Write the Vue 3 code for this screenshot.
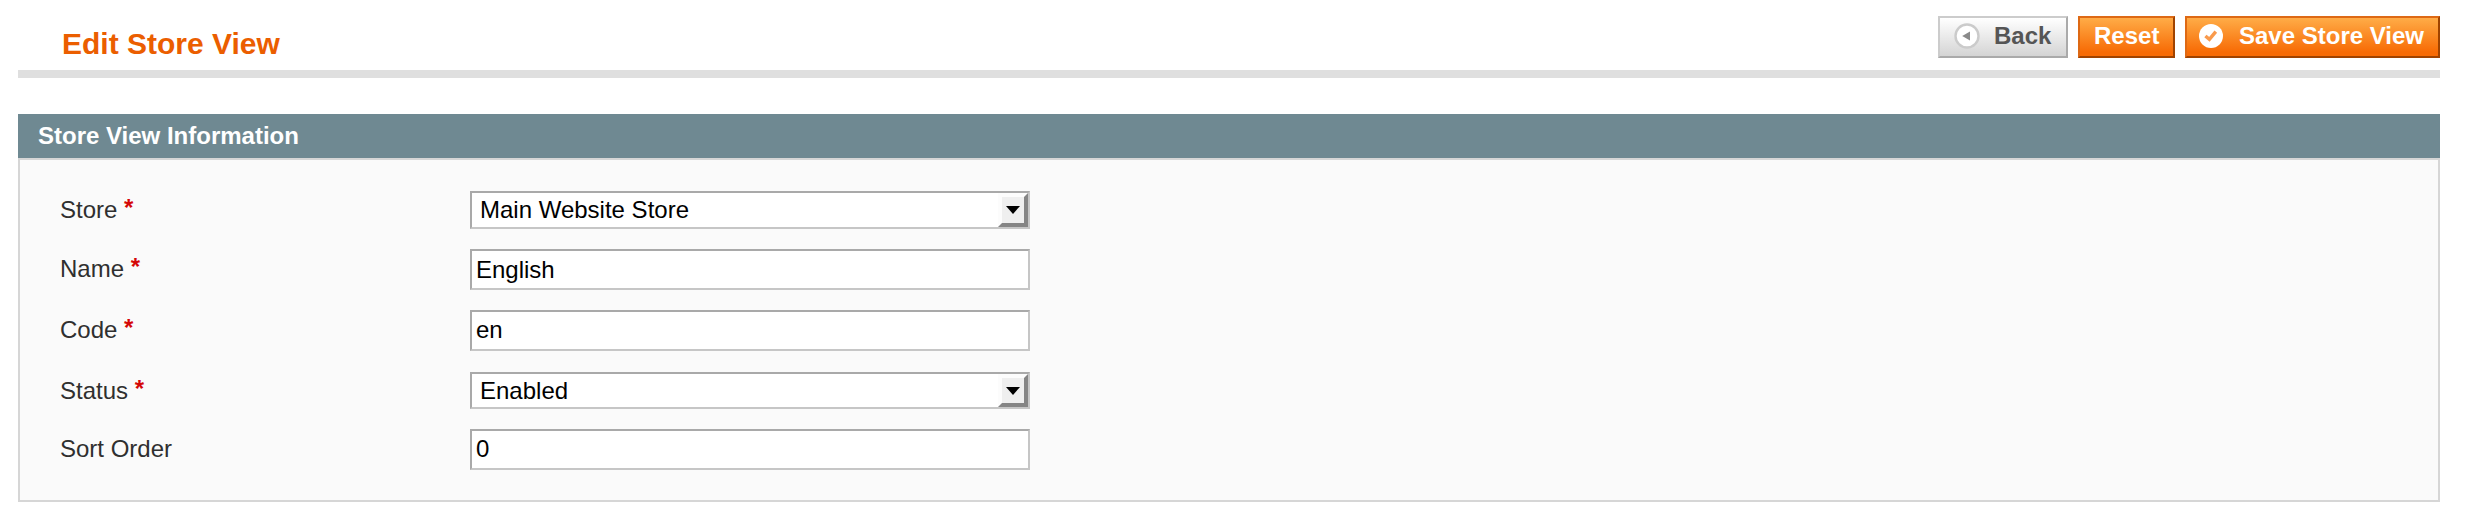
<script setup>
const fields = [
  { label: 'Store', required: true, type: 'select', value: 'Main Website Store', row: 'r1' },
  { label: 'Name', required: true, type: 'text', value: 'English', row: 'r2' },
  { label: 'Code', required: true, type: 'text', value: 'en', row: 'r3' },
  { label: 'Status', required: true, type: 'select', value: 'Enabled', row: 'r4' },
  { label: 'Sort Order', required: false, type: 'text', value: '0', row: 'r5' },
]
</script>

<template>
  <main class="page">
    <header class="top">
      <h1>Edit Store View</h1>
      <div class="actions">
        <button class="btn back">
          <svg class="ico-back" width="26" height="26" viewBox="0 0 26 26">
            <circle cx="13" cy="13" r="11.5" fill="#fff" stroke="#cbcbcb" stroke-width="2.4" />
            <path d="M8.2 13 L16 8.4 V17.6 Z" fill="#8a8a8a" />
          </svg>
          <span>Back</span>
        </button>
        <button class="btn reset"><span>Reset</span></button>
        <button class="btn save">
          <svg class="ico-save" width="24" height="24" viewBox="0 0 24 24">
            <circle cx="12" cy="12" r="12" fill="#fff" />
            <path d="M6.4 12 L10.4 15.4 L16.8 7.6" fill="none" stroke="#f99a4c" stroke-width="3.4" />
          </svg>
          <span>Save Store View</span>
        </button>
      </div>
    </header>

    <section class="panel">
      <h2>Store View Information</h2>
      <div class="body">
        <div v-for="f in fields" :key="f.label" class="row" :class="f.row">
          <label><span>{{ f.label }}</span> <b v-if="f.required">*</b></label>
          <div class="field" :class="f.type">
            <span class="value">{{ f.value }}</span>
            <span v-if="f.type === 'select'" class="drop">
              <svg width="14" height="8" viewBox="0 0 14 8"><path d="M0 0 H14 L7 8 Z" fill="#000" /></svg>
            </span>
          </div>
        </div>
      </div>
    </section>
  </main>
</template>

<style>
body { margin: 0; background: #fff; }
</style>

<style scoped>
.page {
  box-sizing: border-box;
  width: 2470px;
  height: 524px;
  padding: 0 30px 0 18px;
  background: #fff;
  font-family: "Liberation Sans", Arial, sans-serif;
  font-size: 24px;
}
.top {
  box-sizing: border-box;
  height: 78px;
  border-bottom: 8px solid #dfdfdf;
  display: flex;
  justify-content: space-between;
}
h1 {
  margin: 27px 0 0 44px;
  font-size: 30px;
  line-height: 34px;
  color: #eb5e00;
  white-space: nowrap;
}
.actions { display: flex; gap: 10px; padding-top: 16px; }
.btn {
  box-sizing: border-box;
  height: 42px;
  margin: 0;
  padding: 0;
  border: 2px solid;
  border-radius: 0;
  display: flex;
  font: bold 24px/36px "Liberation Sans", Arial, sans-serif;
  white-space: nowrap;
}
.back {
  width: 130px;
  padding-left: 14px;
  gap: 14px;
  color: #555;
  border-color: #ccc #aaa #aaa #ccc;
  background: linear-gradient(#fff, #d4d4d4);
}
.reset { width: 97px; padding-left: 14px; }
.save { width: 255px; padding-left: 12px; gap: 16px; }
.reset, .save {
  color: #fff;
  border-color: #de6914 #a04300 #a04300 #de6914;
  background: linear-gradient(#ffac47, #f76b05 90%);
}
.btn svg { flex: none; }
.ico-back { margin-top: 5px; }
.ico-save { margin-top: 6px; }
.panel { margin-top: 36px; }
h2 {
  margin: 0;
  height: 44px;
  padding-left: 20px;
  font-size: 24px;
  line-height: 44px;
  color: #fff;
  background: #6f8992;
}
.body {
  box-sizing: border-box;
  height: 344px;
  border: 2px solid #d6d6d6;
  background: #fafafa;
  padding: 31px 0 0 40px;
}
.row { display: flex; align-items: flex-start; }
label {
  width: 410px;
  line-height: 28px;
  color: #2f2f2f;
  white-space: nowrap;
}
label b { color: #d40707; font-size: 24px; line-height: 1; vertical-align: 2px; }
.field {
  box-sizing: border-box;
  width: 560px;
  height: 41px;
  border: 2px solid;
  border-color: #a9a9a9 #c6c6c6 #c6c6c6 #a9a9a9;
  background: #fff;
  color: #000;
  display: flex;
  justify-content: space-between;
  line-height: 28px;
  padding-left: 4px;
}
.field.select { height: 38px; padding-left: 8px; }
.value { margin-top: 4px; }
.r2 .value { margin-top: 5px; }
.select .value { margin-top: 3px; }
.drop {
  box-sizing: border-box;
  width: 30px;
  border: 4px solid;
  border-color: #fcfcfc #858585 #858585 #fcfcfc;
  background: #efefef;
  display: flex;
  align-items: center;
  justify-content: center;
}
.drop svg { display: block; }
.r1, .r2, .r4 { margin-bottom: 20px; }
.r3 { margin-bottom: 21px; }
.r4 .field { height: 37px; }
.r1 label { padding-top: 5px; }
.r2 label { padding-top: 6px; }
.r3 label { padding-top: 6px; }
.r4 label { padding-top: 5px; }
.r5 label { padding-top: 6px; }
</style>
